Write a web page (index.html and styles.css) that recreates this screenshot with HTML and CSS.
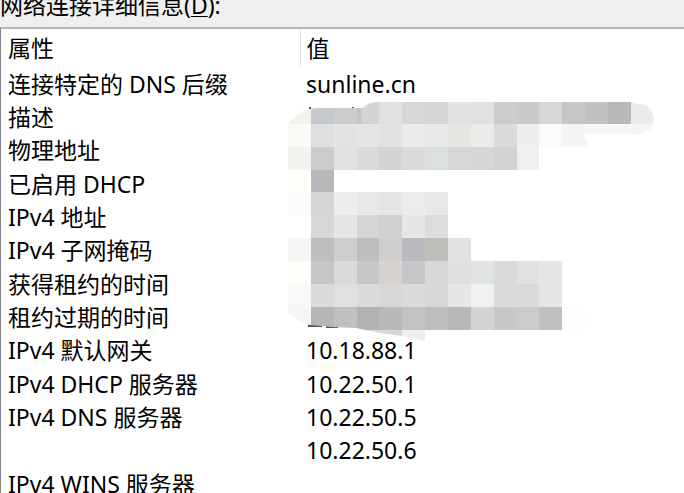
FILE: index.html
```
<!DOCTYPE html>
<html lang="zh-CN">
<head>
<meta charset="utf-8">
<title>网络连接详细信息</title>
<link rel="stylesheet" href="styles.css">
</head>
<body>
<h1 class="caption" id="caption">网络连接详细信息(<u>D</u>):</h1>
<main class="list">
<table class="details" aria-labelledby="caption">
<thead><tr><th class="name" scope="col">属性</th><th scope="col">值</th></tr></thead>
<tbody>
<tr><td>连接特定的 DNS 后缀</td><td>sunline.cn</td></tr>
<tr><td>描述</td><td></td></tr>
<tr><td>物理地址</td><td></td></tr>
<tr><td>已启用 DHCP</td><td></td></tr>
<tr><td>IPv4 地址</td><td></td></tr>
<tr><td>IPv4 子网掩码</td><td></td></tr>
<tr><td>获得租约的时间</td><td></td></tr>
<tr><td>租约过期的时间</td><td></td></tr>
<tr><td>IPv4 默认网关</td><td>10.18.88.1</td></tr>
<tr><td>IPv4 DHCP 服务器</td><td>10.22.50.1</td></tr>
<tr><td>IPv4 DNS 服务器</td><td>10.22.50.5</td></tr>
<tr><td></td><td>10.22.50.6</td></tr>
<tr><td>IPv4 WINS 服务器</td><td></td></tr>
</tbody>
</table>
<svg class="mosaic" viewBox="0 0 366 252" aria-hidden="true">
<defs>
<clipPath id="edge"><path d="M0 23Q13 7 30 7H75Q81 1 91 1H343L351 3A15 15 0 0 1 351 33L295 32 302 46V69H251V92H160V137H183V160H274V206H297V229H137V240L114 235 91 232 68 227 43 226 22 224Q11 222 0 211Z"/></clipPath>
</defs>
<path fill="#555" d="M21 6h2v2h-2zM64 6h2v2h-2zM20 223h14v3h-14zM38 224h12v3h-12z"/>
<g clip-path="url(#edge)">
<g transform="scale(22.85)" shape-rendering="crispEdges">
<rect class="cell" x="0" y="0" fill="#f2f1ee"/><rect class="cell" x="1" y="0" fill="#c6cacf"/><rect class="cell" x="2" y="0" fill="#cdcdcd"/><rect class="cell" x="3" y="0" fill="#c4c4c4"/><rect class="cell" x="4" y="0" fill="#e1e1e1"/><rect class="cell" x="5" y="0" fill="#d5d8d7"/><rect class="cell" x="6" y="0" fill="#d4d7d6"/><rect class="cell" x="7" y="0" fill="#e2e2e2"/><rect class="cell" x="8" y="0" fill="#e1e1df"/><rect class="cell" x="9" y="0" fill="#cfcdcb"/><rect class="cell" x="10" y="0" fill="#c8cacd"/><rect class="cell" x="11" y="0" fill="#d7d7d7"/><rect class="cell" x="12" y="0" fill="#c6c6c6"/><rect class="cell" x="13" y="0" fill="#c1c1bf"/><rect class="cell" x="14" y="0" fill="#bababa"/><rect class="cell" x="15" y="0" fill="#ebebeb"/>
<rect class="cell" x="0" y="1" fill="#fafaf7"/><rect class="cell" x="1" y="1" fill="#dfdfdf"/><rect class="cell" x="2" y="1" fill="#e3e3e3"/><rect class="cell" x="3" y="1" fill="#e5e5e5"/><rect class="cell" x="4" y="1" fill="#e2e2e2"/><rect class="cell" x="5" y="1" fill="#ebebeb"/><rect class="cell" x="6" y="1" fill="#e9e9e9"/><rect class="cell" x="7" y="1" fill="#e6e6e3"/><rect class="cell" x="8" y="1" fill="#ebebe9"/><rect class="cell" x="9" y="1" fill="#dbdbd9"/><rect class="cell" x="10" y="1" fill="#ecefee"/><rect class="cell" x="11" y="1" fill="#f9fcfb"/><rect class="cell" x="12" y="1" fill="#f5f5f5"/><rect class="cell" x="13" y="1" fill="#f6f7f7"/><rect class="cell" x="14" y="1" fill="#f6f7f7"/><rect class="cell" x="15" y="1" fill="#f5f5f5"/>
<rect class="cell" x="0" y="2" fill="#f3f2ef"/><rect class="cell" x="1" y="2" fill="#cacdcb"/><rect class="cell" x="2" y="2" fill="#e1e1df"/><rect class="cell" x="3" y="2" fill="#d8dbda"/><rect class="cell" x="4" y="2" fill="#d4d4d4"/><rect class="cell" x="5" y="2" fill="#dbdbdb"/><rect class="cell" x="6" y="2" fill="#dcdfdf"/><rect class="cell" x="7" y="2" fill="#d7d7d7"/><rect class="cell" x="8" y="2" fill="#d6d6d6"/><rect class="cell" x="9" y="2" fill="#d2d2d0"/><rect class="cell" x="10" y="2" fill="#efefef"/>
<rect class="cell" x="0" y="3" fill="#fefefb"/><rect class="cell" x="1" y="3" fill="#b7b9bb"/>
<rect class="cell" x="0" y="4" fill="#fbfbfb"/><rect class="cell" x="1" y="4" fill="#d4d7d6"/><rect class="cell" x="2" y="4" fill="#ededed"/><rect class="cell" x="3" y="4" fill="#e7e9e8"/><rect class="cell" x="4" y="4" fill="#e5e5e5"/><rect class="cell" x="5" y="4" fill="#edecec"/><rect class="cell" x="6" y="4" fill="#e8e8ea"/>
<rect class="cell" x="1" y="5" fill="#d8d8d8"/><rect class="cell" x="2" y="5" fill="#e6e5e3"/><rect class="cell" x="3" y="5" fill="#d5d5d5"/><rect class="cell" x="4" y="5" fill="#d0d0d0"/><rect class="cell" x="5" y="5" fill="#e7e7e5"/><rect class="cell" x="6" y="5" fill="#dadcde"/>
<rect class="cell" x="0" y="6" fill="#f7f6f4"/><rect class="cell" x="1" y="6" fill="#bcbfbd"/><rect class="cell" x="2" y="6" fill="#d0cecc"/><rect class="cell" x="3" y="6" fill="#bcbfbe"/><rect class="cell" x="4" y="6" fill="#d0cecd"/><rect class="cell" x="5" y="6" fill="#b9bbbe"/><rect class="cell" x="6" y="6" fill="#bfbdba"/><rect class="cell" x="7" y="6" fill="#e0e1e3"/>
<rect class="cell" x="0" y="7" fill="#fdfdfa"/><rect class="cell" x="1" y="7" fill="#c6c8c7"/><rect class="cell" x="2" y="7" fill="#dcdad8"/><rect class="cell" x="3" y="7" fill="#c5c7ca"/><rect class="cell" x="4" y="7" fill="#d6d3d1"/><rect class="cell" x="5" y="7" fill="#c5c7ca"/><rect class="cell" x="6" y="7" fill="#d8d8d8"/><rect class="cell" x="7" y="7" fill="#dfdfdf"/><rect class="cell" x="8" y="7" fill="#e0e4e4"/><rect class="cell" x="9" y="7" fill="#dcdad8"/><rect class="cell" x="10" y="7" fill="#e0e1e3"/><rect class="cell" x="11" y="7" fill="#e6e6e6"/>
<rect class="cell" x="0" y="8" fill="#f9f8f6"/><rect class="cell" x="1" y="8" fill="#d9dcdb"/><rect class="cell" x="2" y="8" fill="#e0e0df"/><rect class="cell" x="3" y="8" fill="#dbdbdb"/><rect class="cell" x="4" y="8" fill="#d8d8d8"/><rect class="cell" x="5" y="8" fill="#dbdbdb"/><rect class="cell" x="6" y="8" fill="#d8d8d8"/><rect class="cell" x="7" y="8" fill="#e7e7e7"/><rect class="cell" x="8" y="8" fill="#f0f2f1"/><rect class="cell" x="9" y="8" fill="#dddbd9"/><rect class="cell" x="10" y="8" fill="#d9dadc"/><rect class="cell" x="11" y="8" fill="#e5e5e5"/>
<rect class="cell" x="0" y="9" fill="#f7f6f4"/><rect class="cell" x="1" y="9" fill="#b5b7b6"/><rect class="cell" x="2" y="9" fill="#c2c0be"/><rect class="cell" x="3" y="9" fill="#b0b2b5"/><rect class="cell" x="4" y="9" fill="#bbb9b7"/><rect class="cell" x="5" y="9" fill="#c1c3c6"/><rect class="cell" x="6" y="9" fill="#bdbdbd"/><rect class="cell" x="7" y="9" fill="#b9b9b9"/><rect class="cell" x="8" y="9" fill="#d4d4d4"/><rect class="cell" x="9" y="9" fill="#c9c7c8"/><rect class="cell" x="10" y="9" fill="#c8cccd"/><rect class="cell" x="11" y="9" fill="#c2c0be"/><rect class="cell" x="12" y="9" fill="#fafefe"/>
<rect class="cell" x="3" y="10" fill="#dcdcdc"/><rect class="cell" x="4" y="10" fill="#d8d8d8"/><rect class="cell" x="5" y="10" fill="#efefef"/>
</g>
<path fill="#d4d4d4" d="M91 0V23H74Q70 8 79 2Z"/>
</g>
</svg>
</main>
</body>
</html>
```
FILE: styles.css
```
* {
  box-sizing: border-box;
}

body {
  display: flex;
  flex-direction: column;
  margin: 0;
  height: 100vh;
  overflow: hidden;
  background: #efefef;
  color: #000;
  font-family: "Noto Sans", "Noto Sans CJK SC", sans-serif;
  font-size: 23px;
  line-height: 28px;
}

.caption {
  flex: none;
  margin: -9px 0 0;
  padding-bottom: 8px;
  font-size: 23px;
  font-weight: 400;
}

.caption u {
  text-decoration-thickness: 1px;
  text-underline-offset: 2px;
}

.list {
  position: relative;
  flex: 1;
  min-height: 0;
  overflow: hidden;
  border-top: 2px solid #b4b5bb;
  border-left: 1px solid #858592;
  background: #fff;
}

.details {
  width: 100%;
  border-collapse: collapse;
  table-layout: fixed;
}

.details th,
.details td {
  height: 33px;
  padding: 0 0 0 6px;
  font-weight: 400;
  text-align: left;
  white-space: nowrap;
}

.details th {
  height: 38px;
}

.details tr:nth-child(3n) td {
  height: 34px;
}

.details tr > :first-child {
  padding-left: 7px;
}

.details .name {
  width: 299px;
  border-right: 1px solid #e3e3e3;
}

.mosaic {
  position: absolute;
  top: 72px;
  left: 287px;
  width: 366px;
  height: 252px;
}

.cell {
  width: 1px;
  height: 1px;
}
```
